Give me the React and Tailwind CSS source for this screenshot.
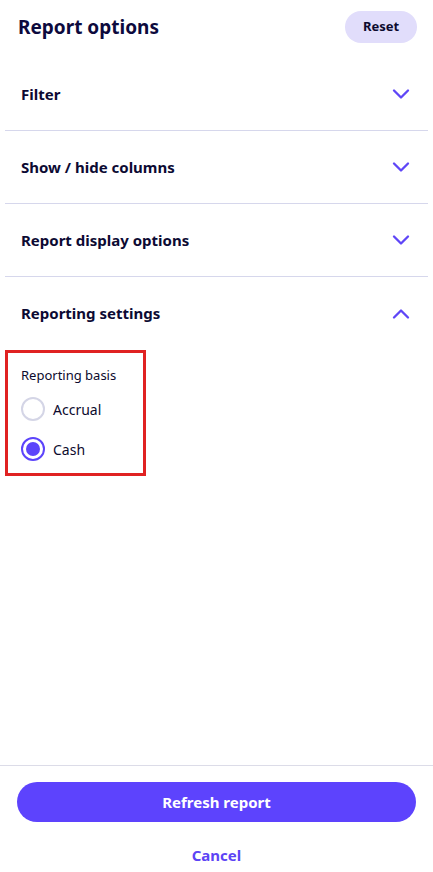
import { ChevronDown, ChevronUp } from 'lucide-react'

const sections = [
  { id: 'filter', label: 'Filter', open: false },
  { id: 'columns', label: 'Show / hide columns', open: false },
  { id: 'display', label: 'Report display options', open: false },
  { id: 'settings', label: 'Reporting settings', open: true },
]

function Radio({ label, checked }) {
  return (
    <label className="flex h-[40px] items-center gap-[8px]">
      <span
        className={`flex h-[24px] w-[24px] items-center justify-center rounded-full border-2 ${
          checked ? 'border-[#5c44fb]' : 'border-[#d4d5e6]'
        }`}
      >
        {checked ? <span className="h-[14px] w-[14px] rounded-full bg-[#5c44fb]" /> : null}
      </span>
      <span className="text-[14px] text-[#0c0a2e]">{label}</span>
    </label>
  )
}

function SectionRow({ label, open, last }) {
  return (
    <div
      className={`flex h-[73px] items-center justify-between pl-[16px] pr-[13px] ${
        last ? '' : 'border-b border-[#d6d7ec]'
      }`}
    >
      <span className="text-[15px] font-bold text-[#0c0a33]">{label}</span>
      {open ? (
        <ChevronUp size={28} strokeWidth={2} className="text-[#5f46f7]" />
      ) : (
        <ChevronDown size={28} strokeWidth={2} className="text-[#5f46f7]" />
      )}
    </div>
  )
}

export default function App() {
  return (
    <div
      className="flex h-[872px] w-[433px] flex-col bg-white"
      style={{ fontFamily: '"Noto Sans", "Open Sans", sans-serif' }}
    >
      <header className="flex h-[58px] items-start justify-between pl-[18px] pr-[16px] pt-[11px]">
        <h1 className="text-[19px] font-bold leading-[32px] text-[#0d0a3d]">Report options</h1>
        <button className="h-[32px] w-[72px] rounded-full bg-[#e1ddfb] text-[13px] font-bold text-[#0c0a2e]">
          Reset
        </button>
      </header>

      <div className="mx-[5px]">
        {sections.map((s, i) => (
          <SectionRow key={s.id} label={s.label} open={s.open} last={i === sections.length - 1} />
        ))}

        <div className="w-[141px] border-[3px] border-[#e02222] px-[13px] pb-[4px] pt-[13px]">
          <p className="text-[13px] leading-[18px] text-[#0c0a2e]">Reporting basis</p>
          <div className="mt-[5px]">
            <Radio label="Accrual" />
            <Radio label="Cash" checked />
          </div>
        </div>
      </div>

      <div className="flex-1" />

      <footer className="border-t border-[#dcdce8] px-[17px] pt-[16px]">
        <button className="h-[40px] w-full rounded-full bg-[#5d43fd] text-[15px] font-bold text-white">
          Refresh report
        </button>
        <button className="mt-[16px] h-[34px] w-full text-[15px] font-bold text-[#5c44f5]">Cancel</button>
      </footer>
    </div>
  )
}
